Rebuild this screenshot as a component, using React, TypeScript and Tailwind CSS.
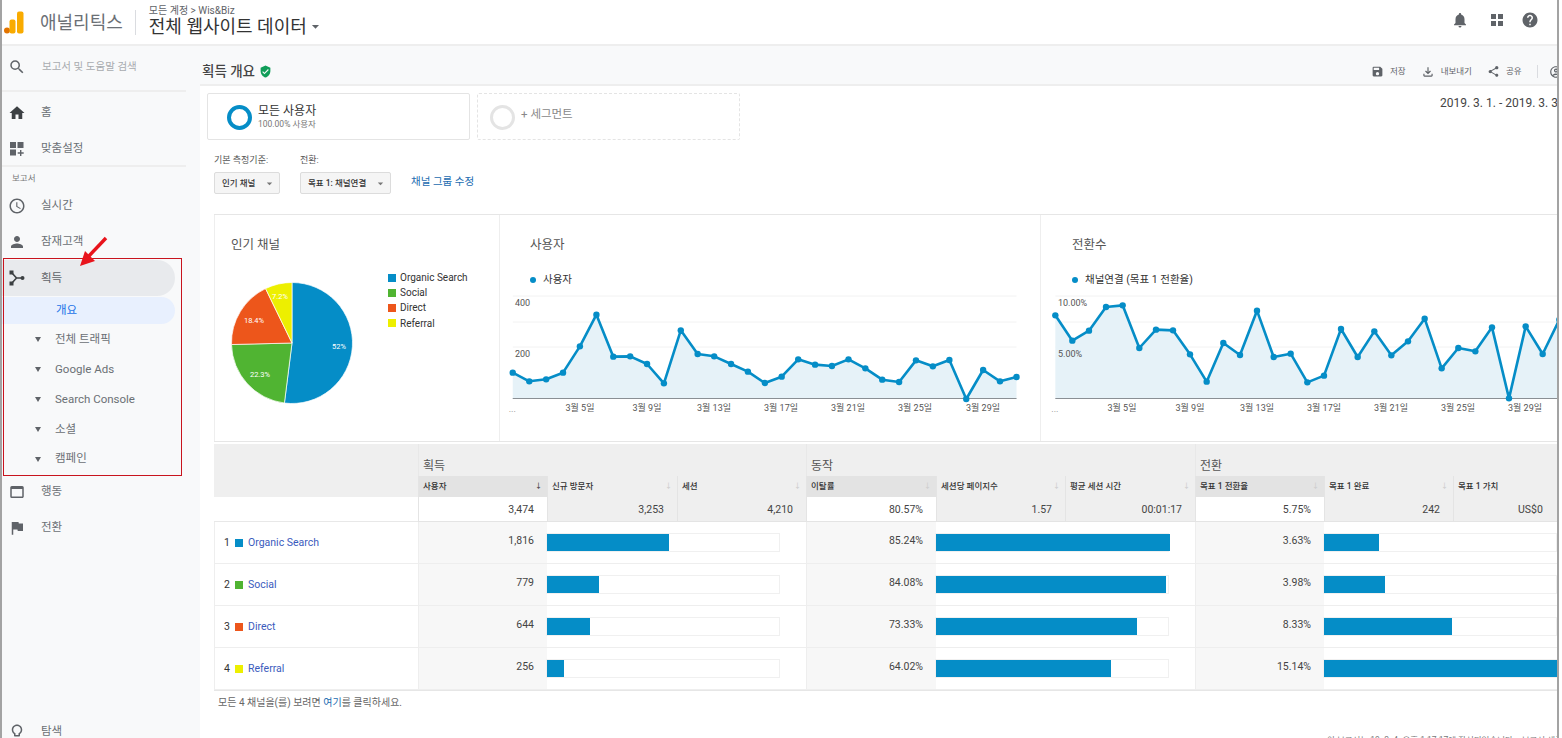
import {
  MdAccessTime,
  MdArrowDropDown,
  MdFlag,
  MdHelp,
  MdHome,
  MdLightbulbOutline,
  MdNotifications,
  MdOutlineAccountCircle,
  MdOutlineFileDownload,
  MdPerson,
  MdSave,
  MdSearch,
  MdShare,
  MdVerifiedUser,
  MdWebAsset,
} from "react-icons/md";

const font = { fontFamily: 'Roboto, "Noto Sans CJK KR", sans-serif' };

const BLUE = "#058dc7";

const userPoints = [
  [37, 431], [85, 457], [134, 451], [183, 431], [232, 352], [280, 257], [329, 383], [378, 382],
  [427, 405], [476, 463], [525, 304], [574, 375], [622, 382], [671, 405], [720, 428], [769, 462],
  [818, 443], [866, 391], [915, 407], [964, 411], [1012, 391], [1061, 418], [1110, 452], [1159, 459],
  [1208, 394], [1257, 412], [1305, 393], [1354, 510], [1403, 423], [1452, 457], [1500, 444],
].map(([x, y]) => [x / 2.904, y / 3 - 65]);

const goalPoints = [
  [43, 259], [94, 335], [144, 305], [195, 234], [245, 229], [295, 357], [345, 302], [396, 304],
  [447, 376], [497, 458], [547, 342], [597, 378], [648, 245], [698, 384], [749, 374], [799, 460],
  [849, 440], [900, 300], [950, 384], [1000, 307], [1051, 379], [1101, 337], [1151, 269], [1202, 418],
  [1252, 357], [1303, 367], [1353, 295], [1404, 508], [1454, 292], [1505, 375], [1555, 272],
].map(([x, y]) => [x / 3, y / 3 - 65]);

const dates = ["3월 5일", "3월 9일", "3월 13일", "3월 17일", "3월 21일", "3월 25일", "3월 29일"];

const channels = [
  { name: "Organic Search", color: "bg-[#058dc7]", users: "1,816", usersBar: 122, bounce: "85.24%", bounceBar: 234, rate: "3.63%", rateBar: 55 },
  { name: "Social", color: "bg-[#50b432]", users: "779", usersBar: 52, bounce: "84.08%", bounceBar: 230, rate: "3.98%", rateBar: 61 },
  { name: "Direct", color: "bg-[#ed561b]", users: "644", usersBar: 43, bounce: "73.33%", bounceBar: 201, rate: "8.33%", rateBar: 128 },
  { name: "Referral", color: "bg-[#edef00]", users: "256", usersBar: 17, bounce: "64.02%", bounceBar: 175, rate: "15.14%", rateBar: 233 },
];

function AcquisitionIcon() {
  return (
    <svg width="16" height="16" viewBox="0 0 16 16" fill="#3c4043">
      <path d="M2.5 2.5 L7.5 8 L2.5 13.5 M7.5 8 H13" fill="none" stroke="#3c4043" strokeWidth="1.6" />
      <rect x="0.5" y="0.5" width="4" height="4" />
      <rect x="0.5" y="11.5" width="4" height="4" />
      <circle cx="13.5" cy="8" r="2" />
    </svg>
  );
}

function CustomIcon() {
  return (
    <svg width="16" height="16" viewBox="0 0 16 16" fill="#5f6368">
      <rect x="1" y="1" width="6" height="6" />
      <rect x="8.5" y="1" width="6" height="6" />
      <rect x="1" y="8.5" width="6" height="6" />
      <path d="M11 9h1.4v2.3h2.3v1.4h-2.3V15H11v-2.3H8.7v-1.4H11z" />
    </svg>
  );
}

function AppsIcon() {
  return (
    <svg width="14" height="14" viewBox="0 0 14 14" fill="#5f6368">
      <rect x="1" y="1" width="5" height="5" />
      <rect x="8" y="1" width="5" height="5" />
      <rect x="1" y="8" width="5" height="5" />
      <rect x="8" y="8" width="5" height="5" />
    </svg>
  );
}

function Logo() {
  return (
    <svg width="20" height="23" viewBox="0 0 20 23" className="shrink-0">
      <circle cx="3" cy="19.5" r="3" fill="#e37400" />
      <rect x="5.5" y="8.5" width="6" height="14" rx="2" fill="#f9ab00" />
      <rect x="13" y="0.5" width="6.5" height="22" rx="2" fill="#f9ab00" />
    </svg>
  );
}

function NavRow({ icon, label }: { icon: React.ReactNode; label: string }) {
  return (
    <div className="flex h-9 shrink-0 items-center">
      <span className="mr-[10px] flex w-[29px] justify-center text-[#5f6368]">{icon}</span>
      <span className="text-[11.5px] text-[#6b7075]">{label}</span>
    </div>
  );
}

function Sidebar() {
  const subItems = ["전체 트래픽", "Google Ads", "Search Console", "소셜", "캠페인"];
  return (
    <aside className="flex w-[198px] shrink-0 flex-col overflow-hidden bg-[#f8f9fa]">
      <div className="mb-[3px] mr-[14px] flex h-[46px] shrink-0 items-center border-b-2 border-[#eeeeee] pb-[2px]">
        <span className="flex w-[29px] justify-center text-[#5f6368]">
          <MdSearch size={18} />
        </span>
        <span className="ml-[11px] text-[10.5px] text-[#a8abaf]">보고서 및 도움말 검색</span>
      </div>
      <NavRow icon={<MdHome size={18} className="text-[#3c4043]" />} label="홈" />
      <NavRow icon={<CustomIcon />} label="맞춤설정" />
      <div className="-mt-[2px] mr-[14px] h-[23px] shrink-0 border-t-2 border-[#eeeeee] pl-[10px] pt-[5px] text-[8.5px] leading-[12px] text-[#777]">
        보고서
      </div>
      <NavRow icon={<MdAccessTime size={18} />} label="실시간" />
      <NavRow icon={<MdPerson size={18} />} label="잠재고객" />
      <div className="mr-[25px] flex h-9 shrink-0 items-center rounded-r-[18px] bg-[#e8eaed]">
        <span className="mr-[10px] flex w-[29px] justify-center">
          <AcquisitionIcon />
        </span>
        <span className="pt-[2px] text-[11.5px] text-[#5f6368]">획득</span>
      </div>
      <div className="mr-[25px] mt-px flex h-[27px] shrink-0 items-center rounded-r-[14px] bg-[#e8f0fe] pl-[54px] text-[11.5px] text-[#1a73e8]">
        개요
      </div>
      <div className="h-px shrink-0" />
      {subItems.map((item) => (
        <div key={item} className="flex h-[29.8px] shrink-0 items-center text-[#6b7075]">
          <span className="ml-[33px] mr-[14px] h-0 w-0 border-x-[3px] border-t-[5px] border-x-transparent border-t-[#5f6368]" />
          <span className="text-[11.5px]">{item}</span>
        </div>
      ))}
      <NavRow icon={<MdWebAsset size={18} />} label="행동" />
      <NavRow icon={<MdFlag size={18} />} label="전환" />
      <div className="mt-auto translate-y-[12px]">
        <NavRow icon={<MdLightbulbOutline size={18} />} label="탐색" />
      </div>
    </aside>
  );
}

function ActionButton({ icon, label }: { icon: React.ReactNode; label: string }) {
  return (
    <span className="flex shrink-0 items-center gap-[6px] whitespace-nowrap text-[8.5px] text-[#5f6368]">
      {icon}
      {label}
    </span>
  );
}

function Dropdown({ label, className }: { label: string; className: string }) {
  return (
    <div className={`flex h-[22px] items-center justify-between rounded-[2px] border border-[#dcdcdc] bg-[#f5f5f5] pl-[7px] pr-[3px] text-[8.5px] font-medium text-[#333] ${className}`}>
      {label}
      <MdArrowDropDown size={13} className="text-[#777]" />
    </div>
  );
}

function PieChart() {
  const cx = 61;
  const cy = 61;
  const r = 60.5;
  const slices = [
    { pct: 52, color: BLUE },
    { pct: 22.6, color: "#50b432" },
    { pct: 18.2, color: "#ed561b" },
    { pct: 7.2, color: "#edef00" },
  ];
  let start = 0;
  const paths = slices.map((s) => {
    const a0 = (start / 100) * Math.PI * 2;
    start += s.pct;
    const a1 = (start / 100) * Math.PI * 2;
    const large = s.pct > 50 ? 1 : 0;
    return {
      color: s.color,
      d: `M${cx} ${cy} L${cx + r * Math.sin(a0)} ${cy - r * Math.cos(a0)} A${r} ${r} 0 ${large} 1 ${cx + r * Math.sin(a1)} ${cy - r * Math.cos(a1)} Z`,
    };
  });
  return (
    <svg width="122" height="122" viewBox="0 0 122 122" className="shrink-0">
      {paths.map((p) => (
        <path key={p.color} d={p.d} fill={p.color} stroke="#fff" strokeWidth="0.7" />
      ))}
      <g fontSize="7.5" fill="#fff" textAnchor="middle" style={font}>
        <text x="108" y="67">52%</text>
        <text x="29" y="95">22.3%</text>
        <text x="23" y="41">18.4%</text>
        <text x="49" y="17">7.2%</text>
      </g>
    </svg>
  );
}

function LineChart({
  points,
  width,
  ticks,
  labelX,
  dateX,
}: {
  points: number[][];
  width: number;
  ticks: [string, string];
  labelX: number;
  dateX: number[];
}) {
  const line = points.map(([x, y]) => `${x},${y}`).join(" ");
  const first = points[0][0];
  const last = points[points.length - 1][0];
  return (
    <svg width={width} height="135" viewBox={`0 0 ${width} 135`} className="mt-[7px] block">
      {[2, 28, 53].map((y) => (
        <line key={y} x1={first} x2={Math.min(last, width)} y1={y} y2={y} stroke="#f2f2f2" />
      ))}
      <polygon points={`${first},105 ${line} ${last},105`} fill="#e6f2f8" />
      <line x1={first} x2={last} y1="104.5" y2="104.5" stroke="#8a8f94" />
      <polyline points={line} fill="none" stroke={BLUE} strokeWidth="2.6" strokeLinejoin="round" />
      {points.map(([x, y]) => (
        <circle key={x} cx={x} cy={y} r="3.2" fill={BLUE} />
      ))}
      <g fontSize="9" fill="#555" style={font}>
        <text x={labelX} y="12">{ticks[0]}</text>
        <text x={labelX} y="63">{ticks[1]}</text>
      </g>
      <text x={first - 4} y="118" fontSize="9" fill="#888" style={font}>...</text>
      <g fontSize="9" fill="#555" textAnchor="middle" style={font}>
        {dates.map((d, i) => (
          <text key={d} x={dateX[i]} y="117">{d}</text>
        ))}
      </g>
    </svg>
  );
}

function ChartsRow() {
  return (
    <section className="ml-[14px] mt-[20px] flex h-[228px] border-y border-[#e6e6e6]">
      <div className="w-[286px] shrink-0 border-x border-[#eeeeee] pl-4 pt-[21px]">
        <h3 className="text-[12.5px] leading-[18px] text-[#555]">인기 채널</h3>
        <div className="mt-[28px] flex">
          <PieChart />
          <ul className="ml-[35px] mt-[-10px] space-y-[3.7px] text-[10px] leading-[11.5px] text-[#333]">
            {channels.map((c) => (
              <li key={c.name} className="flex items-center gap-[4px]">
                <span className={`h-2 w-2 ${c.color}`} />
                {c.name}
              </li>
            ))}
          </ul>
        </div>
      </div>
      <div className="w-[541px] shrink-0 border-r border-[#eeeeee]">
        <h3 className="ml-[30px] mt-[21px] text-[12.5px] leading-[18px] text-[#555]">사용자</h3>
        <div className="ml-[30px] mt-[19px] flex h-[14px] items-center gap-[7px] text-[10.5px] text-[#333]">
          <span className="h-[6px] w-[6px] rounded-full bg-[#058dc7]" />
          사용자
        </div>
        <LineChart
          points={userPoints}
          width={540}
          ticks={["400", "200"]}
          labelX={15}
          dateX={[80, 147, 214, 281, 348, 415, 483]}
        />
      </div>
      <div className="min-w-0 flex-1 overflow-hidden">
        <h3 className="ml-[31px] mt-[21px] text-[12.5px] leading-[18px] text-[#555]">전환수</h3>
        <div className="ml-[31px] mt-[19px] flex h-[14px] items-center gap-[7px] text-[10.5px] text-[#333]">
          <span className="h-[6px] w-[6px] rounded-full bg-[#058dc7]" />
          채널연결 (목표 1 전환율)
        </div>
        <LineChart
          points={goalPoints}
          width={517}
          ticks={["10.00%", "5.00%"]}
          labelX={17}
          dateX={[81, 149, 216, 283, 350, 417, 484]}
        />
      </div>
    </section>
  );
}

const gridCols = "grid-cols-[204px_129px_130px_129px_130px_129px_130px_129px_129px_129px]";

function HeaderCell({ label, sorted, arrow }: { label: string; sorted?: boolean; arrow?: boolean }) {
  return (
    <div className={`flex items-center justify-between border-l border-[#e4e4e4] pl-[4px] pr-[5px] text-[8.5px] font-medium text-[#333] ${sorted ? "bg-[#e3e3e3]" : "bg-[#efefef]"}`}>
      {label}
      <span className={`text-[7px] ${arrow ? "text-[#333]" : "text-[#cccccc]"}`}>↓</span>
    </div>
  );
}

function TotalCell({ value, primary }: { value: string; primary?: boolean }) {
  return (
    <div className={`flex items-center justify-end border-b border-l border-[#e4e4e4] pr-[13px] pt-[2px] text-[10.5px] text-[#444] ${primary ? "bg-white" : "bg-[#efefef]"}`}>
      {value}
    </div>
  );
}

function ValueCell({ value }: { value: string }) {
  return (
    <div className="flex items-center justify-end border-l border-[#eeeeee] bg-[#f7f7f7] pb-[3px] pr-[13px] text-[10.5px] text-[#444]">
      {value}
    </div>
  );
}

function BarCell({ width }: { width: number }) {
  return (
    <div className="col-span-2 -ml-[1px] flex items-center pb-px">
      <div className="h-[19px] w-[234px] border border-[#f0f0f0] bg-white">
        <div className="h-[17px] bg-[#058dc7]" style={{ width }} />
      </div>
    </div>
  );
}

function DataTable() {
  return (
    <section className={`ml-[14px] mt-[2px] grid ${gridCols} grid-rows-[32px_21px_25px_42px_42px_42px_42px] overflow-hidden border-b border-[#e6e6e6]`}>
      <div className="col-span-10 row-start-1 grid grid-cols-subgrid bg-[#efefef] text-[12px] text-[#555]">
        <div />
        <div className="col-span-3 border-l border-[#e8e8e8] pl-[4px] pt-[13px] leading-[18px]">획득</div>
        <div className="col-span-3 border-l border-[#e8e8e8] pl-[4px] pt-[13px] leading-[18px]">동작</div>
        <div className="col-span-3 border-l border-[#e8e8e8] pl-[4px] pt-[13px] leading-[18px]">전환</div>
      </div>
      <div className="bg-[#efefef]" />
      <HeaderCell label="사용자" sorted arrow />
      <HeaderCell label="신규 방문자" />
      <HeaderCell label="세션" />
      <HeaderCell label="이탈률" sorted />
      <HeaderCell label="세션당 페이지수" />
      <HeaderCell label="평균 세션 시간" />
      <HeaderCell label="목표 1 전환율" sorted />
      <HeaderCell label="목표 1 완료" />
      <HeaderCell label="목표 1 가치" />
      <div className="border-b border-[#e8e8e8]" />
      <TotalCell value="3,474" primary />
      <TotalCell value="3,253" />
      <TotalCell value="4,210" />
      <TotalCell value="80.57%" primary />
      <TotalCell value="1.57" />
      <TotalCell value="00:01:17" />
      <TotalCell value="5.75%" primary />
      <TotalCell value="242" />
      <div className="flex items-center border-b border-l border-[#e4e4e4] bg-[#efefef] pl-[64px] pt-[2px] text-[10.5px] text-[#444]">
        US$0
      </div>
      {channels.map((c, i) => (
        <div key={c.name} className="col-span-10 grid grid-cols-subgrid border-b border-[#eeeeee]">
          <div className="flex items-center border-l border-[#eeeeee] pl-[9px] text-[10.5px]">
            <span className="w-[11px] text-[#333]">{i + 1}</span>
            <span className={`h-2 w-2 ${c.color}`} />
            <span className="ml-[5px] text-[#3b5bbd]">{c.name}</span>
          </div>
          <ValueCell value={c.users} />
          <BarCell width={c.usersBar} />
          <ValueCell value={c.bounce} />
          <BarCell width={c.bounceBar} />
          <ValueCell value={c.rate} />
          <BarCell width={c.rateBar} />
        </div>
      ))}
    </section>
  );
}

export default function App() {
  return (
    <div className="flex h-[738px] w-[1559px] flex-col overflow-hidden border-x-2 border-[#a3a3a3] bg-white" style={font}>
      <header className="flex h-[46px] shrink-0 items-center border-b-2 border-[#eeeeee] bg-white">
        <div className="ml-[2px]">
          <Logo />
        </div>
        <span className="ml-[16px] text-[18px] text-[#6b7075]">애널리틱스</span>
        <span className="ml-[12px] h-[25px] w-px bg-[#dadce0]" />
        <div className="-mt-[2px] ml-[13px]">
          <div className="flex items-center text-[10px] leading-[11px] text-[#5f6368]">모든 계정 &gt; Wis&amp;Biz</div>
          <div className="flex items-center text-[18px] leading-[22px] text-[#333]">
            전체 웹사이트 데이터
            <MdArrowDropDown size={17} className="text-[#5f6368]" />
          </div>
        </div>
        <div className="-mt-[4px] ml-auto mr-[18px] flex items-center text-[#5f6368]">
          <MdNotifications size={18} />
          <span className="ml-[21px] mr-[17px]">
            <AppsIcon />
          </span>
          <MdHelp size={18} />
        </div>
      </header>
      <div className="flex min-h-0 flex-1">
        <Sidebar />
        <main className="relative min-w-0 flex-1 overflow-hidden bg-white">
          <div className="flex h-[40px] items-center justify-between border-b-2 border-[#eeeeee] bg-[#f8f9fa] pl-[2px] pt-[13px]">
            <h1 className="flex items-center gap-[4px] text-[13.5px] font-medium text-[#444]">
              획득 개요
              <MdVerifiedUser size={13} className="text-[#0f9d58]" />
            </h1>
            <div className="flex w-[186px] shrink-0 items-center gap-[15px] overflow-hidden">
              <ActionButton icon={<MdSave size={13} />} label="저장" />
              <ActionButton icon={<MdOutlineFileDownload size={14} />} label="내보내기" />
              <ActionButton icon={<MdShare size={13} />} label="공유" />
              <span className="h-[13px] w-px shrink-0 bg-[#dadce0]" />
              <MdOutlineAccountCircle size={14} className="-ml-[4px] shrink-0 text-[#5f6368]" />
            </div>
          </div>
          <div className="mt-[7px] flex justify-between">
            <div className="ml-[7px] flex gap-[7px]">
              <div className="flex h-[47px] w-[263px] items-start rounded-[2px] border border-[#e4e4e4] pl-[19px] pt-[11px]">
                <span className="h-[25px] w-[25px] rounded-full border-[4px] border-[#058dc7]" />
                <div className="ml-[6px] mt-[-1px]">
                  <div className="text-[12px] leading-[15px] text-[#333]">모든 사용자</div>
                  <div className="text-[8.5px] leading-[11px] text-[#777]">100.00% 사용자</div>
                </div>
              </div>
              <div className="flex h-[47px] w-[263px] items-start rounded-[2px] border border-dashed border-[#e4e4e4] pl-[12px] pt-[11px]">
                <span className="h-[25px] w-[25px] rounded-full border-[3px] border-[#e4e4e4]" />
                <span className="ml-[6px] mt-[2px] text-[11.5px] leading-[15px] text-[#888]">+ 세그먼트</span>
              </div>
            </div>
            <div className="mr-[-10px] w-[127px] shrink-0 overflow-hidden whitespace-nowrap pt-[3px] text-[12px] leading-[15px] text-[#444]">
              2019. 3. 1. - 2019. 3. 31.
            </div>
          </div>
          <div className="ml-[14px] mt-[13px] flex">
            <div className="w-[86px]">
              <div className="pt-px text-[9px] leading-[12px] text-[#555]">기본 측정기준:</div>
              <Dropdown label="인기 채널" className="mt-[6px] w-[66px]" />
            </div>
            <div className="w-[111px]">
              <div className="pt-px text-[9px] leading-[12px] text-[#555]">전환:</div>
              <Dropdown label="목표 1: 채널연결" className="mt-[6px] w-[91px]" />
            </div>
            <a className="mt-[21px] text-[10.5px] leading-[15px] text-[#1a6bb0]">채널 그룹 수정</a>
          </div>
          <ChartsRow />
          <DataTable />
          <p className="ml-[18px] mt-[5px] text-[10px] leading-[14px] text-[#666]">
            모든 4 채널을(를) 보려면 <span className="text-[#1a6bb0]">여기</span>를 클릭하세요.
          </p>
          <p className="absolute right-0 top-[688px] w-[230px] overflow-hidden whitespace-nowrap text-[8.5px] text-[#777]">
            이 보고서는 19. 3. 4. 오후 1:17:17에 작성되었습니다. - 보고서 새로고침
          </p>
        </main>
      </div>
      <div className="pointer-events-none absolute left-[3px] top-[258px] h-[218px] w-[179px] border border-[#c8141e]" />
      <svg width="30" height="32" viewBox="0 0 30 32" className="pointer-events-none absolute left-[79px] top-[236px]">
        <path d="M27 2 L9 21" stroke="#e8141c" strokeWidth="3.4" />
        <path d="M1 30 L6 15 L16 25 Z" fill="#e8141c" />
      </svg>
    </div>
  );
}
